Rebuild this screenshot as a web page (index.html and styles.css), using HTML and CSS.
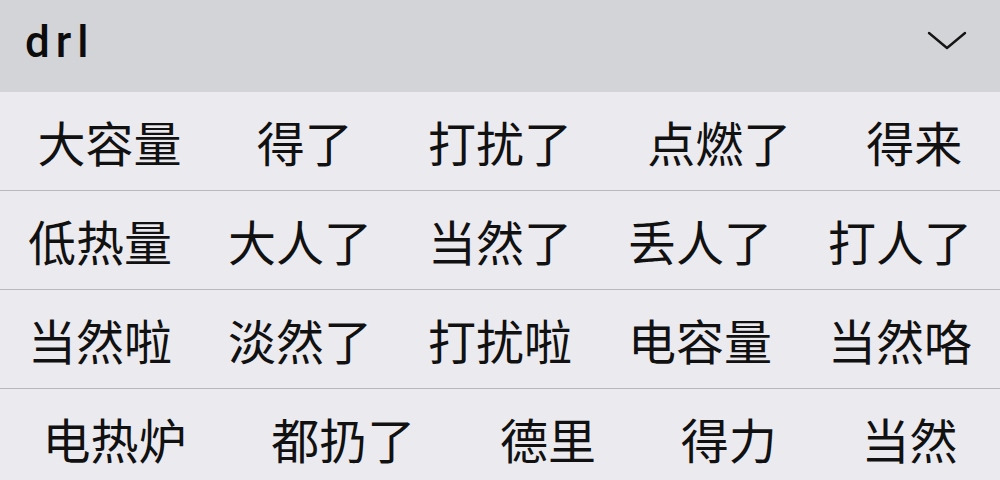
FILE: index.html
```html
<!DOCTYPE html>
<html lang="zh-CN">
<head>
<meta charset="utf-8">
<link rel="stylesheet" href="styles.css">
</head>
<body>
<div class="keyboard">
  <div class="header">
    <span class="input">drl</span>
    <svg class="chevron" width="40" height="20" viewBox="0 0 40 20">
      <path d="M2 2 L20 17 L38 2" fill="none" stroke="#151515" stroke-width="2.4" stroke-linecap="round" stroke-linejoin="round"/>
    </svg>
  </div>
  <div class="row">
    <span class="cand">大容量</span><span class="cand">得了</span><span class="cand">打扰了</span><span class="cand">点燃了</span><span class="cand">得来</span>
  </div>
  <div class="row">
    <span class="cand">低热量</span><span class="cand">大人了</span><span class="cand">当然了</span><span class="cand">丢人了</span><span class="cand">打人了</span>
  </div>
  <div class="row">
    <span class="cand">当然啦</span><span class="cand">淡然了</span><span class="cand">打扰啦</span><span class="cand">电容量</span><span class="cand">当然咯</span>
  </div>
  <div class="row last">
    <span class="cand">电热炉</span><span class="cand">都扔了</span><span class="cand">德里</span><span class="cand">得力</span><span class="cand">当然</span>
  </div>
</div>
</body>
</html>
```
FILE: styles.css
```css
html, body {
  margin: 0;
  padding: 0;
  background: #ebeaef;
}
.keyboard {
  width: 1000px;
  height: 480px;
  overflow: hidden;
  display: flex;
  flex-direction: column;
  background: #ebeaef;
  color: #111;
}
.header {
  height: 92px;
  flex: 0 0 92px;
  background: #d3d4d8;
  display: flex;
  align-items: center;
  justify-content: space-between;
  padding: 0 33px 0 25px;
  box-sizing: border-box;
}
.input {
  font-family: Roboto, "Noto Sans", sans-serif;
  font-weight: 500;
  font-size: 44px;
  letter-spacing: 6px;
  color: #0c0c0c;
  margin-top: -8px;
}
.chevron {
  display: block;
  margin-top: -10px;
}
.row {
  height: 98px;
  flex: 0 0 98px;
  display: flex;
  align-items: center;
  justify-content: space-around;
  border-bottom: 1px solid #b9b9bd;
  font-family: "Noto Sans CJK SC", "Noto Sans", sans-serif;
  font-size: 48px;
  font-weight: 400;
}
.row.last {
  border-bottom: none;
  padding-left: 0;
  padding-right: 0;
}
.cand {
  line-height: 1;
  white-space: nowrap;
}
```
